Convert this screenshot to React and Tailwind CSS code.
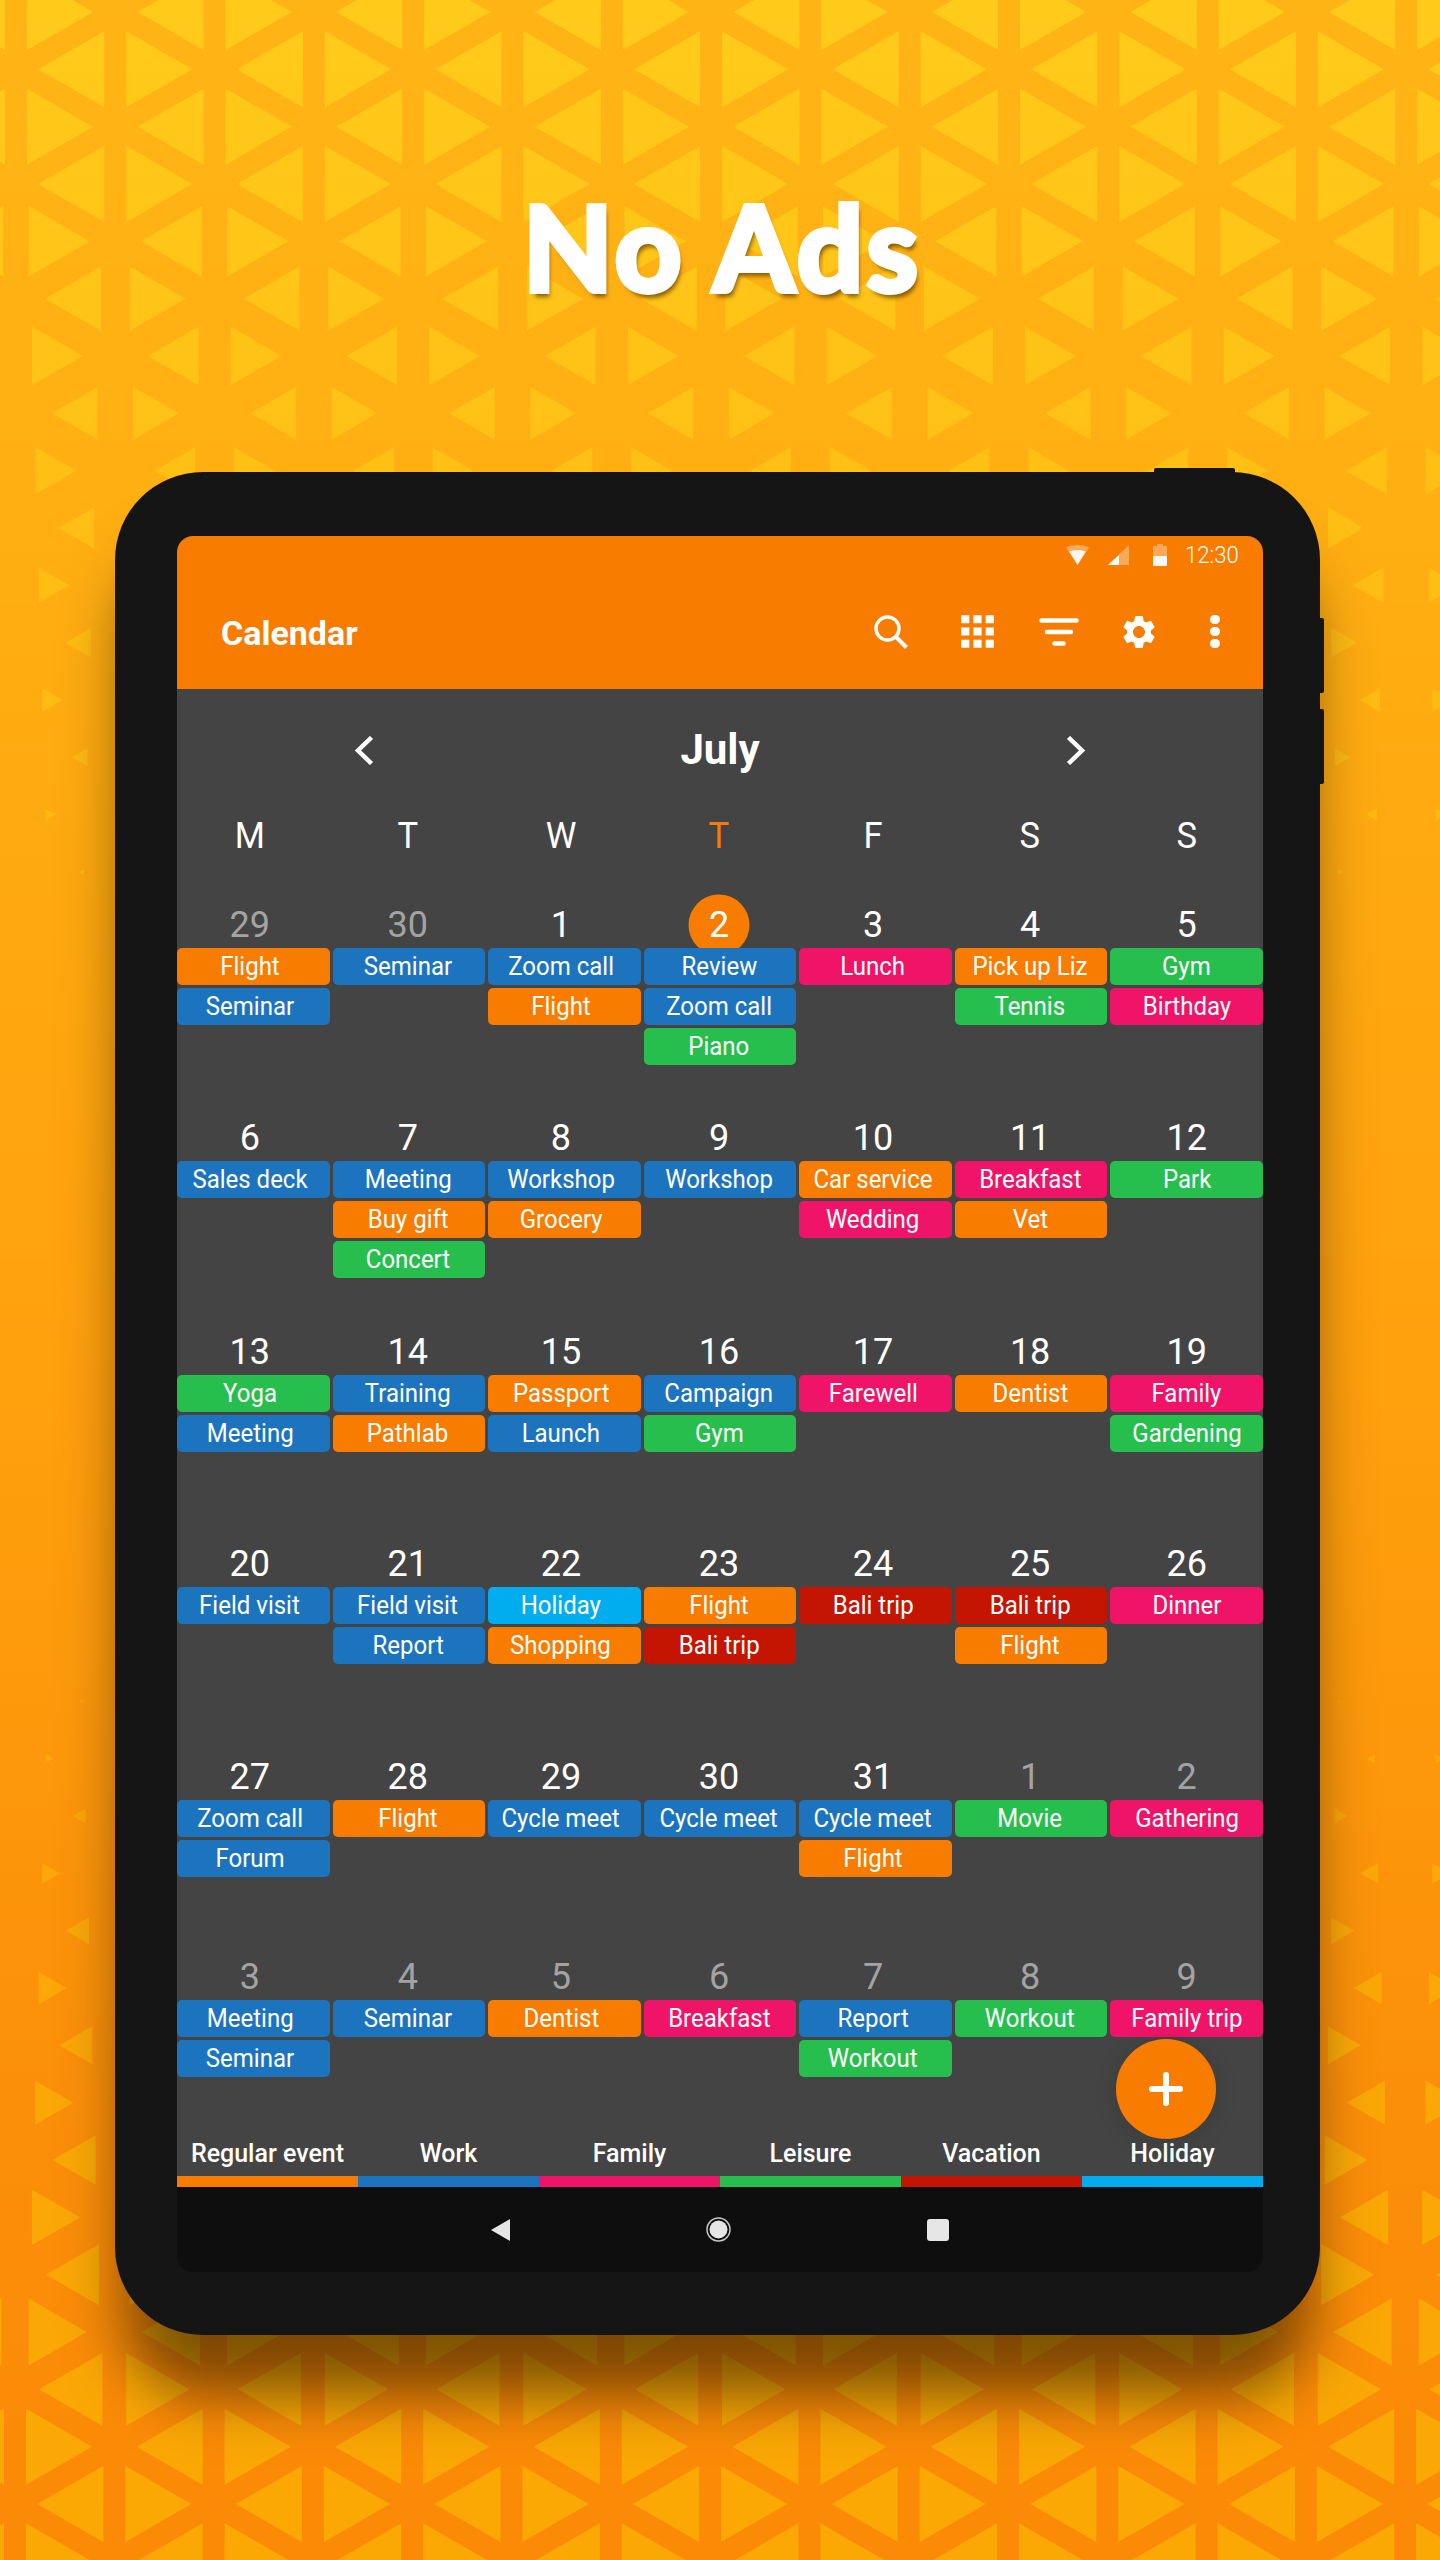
import React from 'react';
import { MdApps, MdSettings } from 'react-icons/md';

const colors = {
  o: 'bg-[#f77c00]',
  b: 'bg-[#1d74be]',
  p: 'bg-[#ef1467]',
  g: 'bg-[#26bf4e]',
  r: 'bg-[#c41502]',
  c: 'bg-[#02adef]',
};

// text in each column sits a little left of the chip centre in the picture
const colPad = ['pr-[7px]', 'pr-[2px]', 'pr-[7px]', 'pr-[2px]', 'pr-[5px]', 'pr-[2px]', 'pr-0'];

const weeks = [
  {
    h: 'h-[213px]',
    days: [
      { n: 29, muted: true, ev: [['Flight', 'o'], ['Seminar', 'b']] },
      { n: 30, muted: true, ev: [['Seminar', 'b']] },
      { n: 1, ev: [['Zoom call', 'b'], ['Flight', 'o']] },
      { n: 2, today: true, ev: [['Review', 'b'], ['Zoom call', 'b'], ['Piano', 'g']] },
      { n: 3, ev: [['Lunch', 'p']] },
      { n: 4, ev: [['Pick up Liz', 'o'], ['Tennis', 'g']] },
      { n: 5, ev: [['Gym', 'g'], ['Birthday', 'p']] },
    ],
  },
  {
    h: 'h-[214px]',
    days: [
      { n: 6, ev: [['Sales deck', 'b']] },
      { n: 7, ev: [['Meeting', 'b'], ['Buy gift', 'o'], ['Concert', 'g']] },
      { n: 8, ev: [['Workshop', 'b'], ['Grocery', 'o']] },
      { n: 9, ev: [['Workshop', 'b']] },
      { n: 10, ev: [['Car service', 'o'], ['Wedding', 'p']] },
      { n: 11, ev: [['Breakfast', 'p'], ['Vet', 'o']] },
      { n: 12, ev: [['Park', 'g']] },
    ],
  },
  {
    h: 'h-[212px]',
    days: [
      { n: 13, ev: [['Yoga', 'g'], ['Meeting', 'b']] },
      { n: 14, ev: [['Training', 'b'], ['Pathlab', 'o']] },
      { n: 15, ev: [['Passport', 'o'], ['Launch', 'b']] },
      { n: 16, ev: [['Campaign', 'b'], ['Gym', 'g']] },
      { n: 17, ev: [['Farewell', 'p']] },
      { n: 18, ev: [['Dentist', 'o']] },
      { n: 19, ev: [['Family', 'p'], ['Gardening', 'g']] },
    ],
  },
  {
    h: 'h-[213px]',
    days: [
      { n: 20, ev: [['Field visit', 'b']] },
      { n: 21, ev: [['Field visit', 'b'], ['Report', 'b']] },
      { n: 22, ev: [['Holiday', 'c'], ['Shopping', 'o']] },
      { n: 23, ev: [['Flight', 'o'], ['Bali trip', 'r']] },
      { n: 24, ev: [['Bali trip', 'r']] },
      { n: 25, ev: [['Bali trip', 'r'], ['Flight', 'o']] },
      { n: 26, ev: [['Dinner', 'p']] },
    ],
  },
  {
    h: 'h-[200px]',
    days: [
      { n: 27, ev: [['Zoom call', 'b'], ['Forum', 'b']] },
      { n: 28, ev: [['Flight', 'o']] },
      { n: 29, ev: [['Cycle meet', 'b']] },
      { n: 30, ev: [['Cycle meet', 'b']] },
      { n: 31, ev: [['Cycle meet', 'b'], ['Flight', 'o']] },
      { n: 1, muted: true, ev: [['Movie', 'g']] },
      { n: 2, muted: true, ev: [['Gathering', 'p']] },
    ],
  },
  {
    h: '',
    days: [
      { n: 3, muted: true, ev: [['Meeting', 'b'], ['Seminar', 'b']] },
      { n: 4, muted: true, ev: [['Seminar', 'b']] },
      { n: 5, muted: true, ev: [['Dentist', 'o']] },
      { n: 6, muted: true, ev: [['Breakfast', 'p']] },
      { n: 7, muted: true, ev: [['Report', 'b'], ['Workout', 'g']] },
      { n: 8, muted: true, ev: [['Workout', 'g']] },
      { n: 9, muted: true, ev: [['Family trip', 'p']] },
    ],
  },
];

const weekdays = ['M', 'T', 'W', 'T', 'F', 'S', 'S'];
const legend = [
  ['Regular event', 'o'],
  ['Work', 'b'],
  ['Family', 'p'],
  ['Leisure', 'g'],
  ['Vacation', 'r'],
  ['Holiday', 'c'],
];

// background triangles: a hex lattice, each triangle shrunk around its centroid by row
function triangles() {
  const out = [];
  const pitchX = 99.3;
  const pitchY = 57.33;
  const addRow = (y, odd, x0, s) => {
    if (s <= 0.01) return;
    for (let j = -1; j < 9; j++) {
      const bar = x0 + (odd ? pitchX : 0) + j * pitchX * 2;
      const h = 38 * s;
      const r = bar + 33;
      const l = bar - 33;
      out.push(`${r - 22 * s},${y - h} ${r + 44 * s},${y} ${r - 22 * s},${y + h}`);
      out.push(`${l + 22 * s},${y - h} ${l - 44 * s},${y} ${l + 22 * s},${y + h}`);
    }
  };
  for (let k = -1; k <= 17; k++) {
    const y = 12 + k * pitchY;
    addRow(y, k % 2 !== 0, 16, Math.min(1, Math.max(0, (930 - y) / 746)));
  }
  for (let k = -12; k <= 5; k++) {
    const y = 2332 + k * pitchY;
    addRow(y, k % 2 !== 0, 15, Math.min(1, Math.max(0, (y - 1669) / 752)));
  }
  return out;
}

const trianglePoints = triangles();

const Squeezed = ({ children }) => (
  <span className="inline-block scale-x-[.96] whitespace-nowrap">{children}</span>
);

const Day = ({ day, col }) => (
  <div>
    <div className={`h-[46px] flex items-center justify-center text-[36px] leading-none ${colPad[col]} ${day.muted ? 'text-[#a3a3a3]' : 'text-white'}`}>
      <span className="relative inline-block">
        {day.today && (
          <span className="absolute left-1/2 top-1/2 w-[61px] h-[61px] -translate-x-1/2 -translate-y-1/2 rounded-full bg-[#f77c00]" />
        )}
        <span className="relative">{day.n}</span>
      </span>
    </div>
    <div className="relative flex flex-col gap-[3px]">
      {day.ev.map(([label, c], i) => (
        <div key={i} className={`h-[37px] rounded-[5px] flex items-center justify-center text-[25px] leading-none text-white ${colors[c]} ${colPad[col]}`}>
          <Squeezed>{label}</Squeezed>
        </div>
      ))}
    </div>
  </div>
);

const StatusIcons = () => (
  <div className="flex items-center">
    <svg width="23" height="20" viewBox="0 0 23 20" fill="white">
      <path d="M11.5 20 0 2.5C3 .8 7 0 11.5 0S20 .8 23 2.5Z" opacity=".35" />
      <path d="M11.5 20 3.2 6.5C5.5 5.4 8.3 4.9 11.5 4.9s6 .5 8.300 1.6Z" opacity=".9" />
    </svg>
    <svg className="ml-[19px]" width="21" height="20" viewBox="0 0 21 20" fill="white">
      <path d="M21 0v20H0Z" opacity=".35" />
      <path d="M11 10v10H0Z" opacity=".95" />
    </svg>
    <svg className="ml-[24px]" width="14" height="22" viewBox="0 0 14 22" fill="white">
      <path d="M4 0h6v2h4v10H0V2h4Z" opacity=".35" />
      <path d="M0 12h14v9a1 1 0 0 1-1 1H1a1 1 0 0 1-1-1Z" opacity=".95" />
    </svg>
    <span className="ml-[17px] mr-[23px] text-[23px] leading-none font-light text-white">
      <Squeezed>12:30</Squeezed>
    </span>
  </div>
);

const ToolbarIcons = () => (
  <div className="flex items-center text-white">
    <svg width="34" height="34" viewBox="0 0 34 34" fill="none" stroke="white">
      <circle cx="13.500" cy="13.500" r="11.500" strokeWidth="3.500" />
      <path d="M21.500 21.500 32.500 32.500" strokeWidth="4" />
    </svg>
    <MdApps className="ml-[45px] w-[49px] h-[49px]" />
    <svg className="ml-[37px]" width="40" height="28" viewBox="0 0 40 28" fill="none" stroke="white" strokeWidth="4.500" strokeLinecap="round">
      <path d="M2.500 2.500h35M8 14h24M15.500 25.500h9" />
    </svg>
    <MdSettings className="ml-[40px] w-[40px] h-[40px]" />
    <div className="ml-[51px] mr-[43px] flex flex-col gap-[3px]">
      <span className="w-[10px] h-[9px] rounded-full bg-white" />
      <span className="w-[10px] h-[9px] rounded-full bg-white" />
      <span className="w-[10px] h-[9px] rounded-full bg-white" />
    </div>
  </div>
);

const Chevron = ({ flip }) => (
  <svg width="19" height="29" viewBox="0 0 19 29" fill="none" stroke="white" strokeWidth="4.500">
    <path d={flip ? 'M2.500 1.500 16 14.500 2.500 27.500' : 'M16.500 1.500 3 14.500 16.500 27.500'} />
  </svg>
);

export default function App() {
  return (
    <div className="relative w-[1440px] h-[2560px] overflow-hidden font-[Roboto,sans-serif] bg-[linear-gradient(180deg,#ffb415_0,#ffaf12_500px,#ffa00d_1400px,#fb8f09_2100px,#fb8a06_100%)]">
      {/* Background pattern */}
      <svg className="absolute inset-0" width="1440" height="2560" viewBox="0 0 1440 2560">
        <defs>
          <linearGradient id="tri" gradientUnits="userSpaceOnUse" x1="0" y1="0" x2="0" y2="2560">
            <stop offset="0" stopColor="#ffcb1b" />
            <stop offset=".2" stopColor="#ffbf14" />
            <stop offset=".7" stopColor="#fba808" />
            <stop offset="1" stopColor="#fba805" />
          </linearGradient>
        </defs>
        <g fill="url(#tri)">
          {trianglePoints.map((p, i) => (
            <polygon key={i} points={p} />
          ))}
        </g>
      </svg>

      <div className="relative">
        {/* Title */}
        <div className="h-[472px] pt-[22px] pl-[5px] flex items-center justify-center">
          <h1 className="font-['Lato',sans-serif] font-bold text-[116px] tracking-[4px] leading-none text-white [-webkit-text-stroke:6px_white] [stroke-linejoin:round] [text-shadow:3px_6px_4px_rgba(70,45,0,.65)]">
            No Ads
          </h1>
        </div>

        {/* Tablet */}
        <div className="relative ml-[115px] w-[1205px] h-[1863px] rounded-[88px] bg-[#151515] pt-[64px] pl-[62px] shadow-[0_70px_60px_-10px_rgba(0,0,0,.5)]">
          <div className="absolute -top-[4px] left-[1039px] w-[81px] h-[6px] rounded-t-[2px] bg-[#151515]" />
          <div className="absolute top-[146px] -right-[4px] w-[6px] h-[75px] rounded-r-[2px] bg-[#151515]" />
          <div className="absolute top-[237px] -right-[4px] w-[6px] h-[75px] rounded-r-[2px] bg-[#151515]" />

          {/* Screen */}
          <div className="relative w-[1086px] h-[1736px] rounded-[16px] overflow-hidden flex flex-col bg-[#0e0e0e]">
            <div className="bg-[#f77c00] h-[153px] shrink-0">
              <div className="h-[38px] flex items-center justify-end">
                <StatusIcons />
              </div>
              <div className="h-[115px] flex items-center justify-between pl-[44px]">
                <span className="pt-[2px] text-[34px] leading-none font-bold text-white">Calendar</span>
                <ToolbarIcons />
              </div>
            </div>

            {/* Calendar */}
            <div className="flex-1 flex flex-col bg-[#444444]">
              <div className="h-[122px] mx-auto w-[730px] flex items-center justify-between">
                <Chevron />
                <span className="text-[42px] leading-none font-bold text-white">July</span>
                <Chevron flip />
              </div>
              <div className="h-[50px] grid grid-cols-7 gap-x-[3px]">
                {weekdays.map((d, i) => (
                  <div key={i} className={`flex items-center justify-center text-[36px] leading-none ${colPad[i]} ${i === 3 ? 'text-[#f77c00]' : 'text-white'}`}>
                    <Squeezed>{d}</Squeezed>
                  </div>
                ))}
              </div>
              <div className="mt-[41px]">
                {weeks.map((w, wi) => (
                  <div key={wi} className={`grid grid-cols-7 gap-x-[3px] ${w.h}`}>
                    {w.days.map((day, i) => (
                      <Day key={i} day={day} col={i} />
                    ))}
                  </div>
                ))}
              </div>

              {/* Legend */}
              <div className="mt-auto grid grid-cols-6">
                {legend.map(([label, c]) => (
                  <div key={label} className="flex flex-col items-center">
                    <span className="h-[46px] flex items-center text-[25px] leading-none font-medium text-white">
                      {label}
                    </span>
                    <div className={`w-full h-[11px] ${colors[c]}`} />
                  </div>
                ))}
              </div>
            </div>

            {/* Nav bar */}
            <div className="h-[85px] shrink-0 flex items-center justify-center gap-[196px]">
              <svg width="19" height="22" viewBox="0 0 19 22" fill="#e6e6e6">
                <path d="M19 0v22L0 11Z" />
              </svg>
              <svg width="25" height="25" viewBox="0 0 25 25">
                <circle cx="12.500" cy="12.500" r="11.500" fill="none" stroke="#c8c8c8" strokeWidth="1.500" />
                <circle cx="12.500" cy="12.500" r="9" fill="#e6e6e6" />
              </svg>
              <div className="w-[22px] h-[22px] rounded-[3px] bg-[#e6e6e6]" />
            </div>

            {/* Add button */}
            <div className="absolute left-[939px] top-[1503px] w-[100px] h-[100px] rounded-full bg-[#f77c00] flex items-center justify-center shadow-[0_4px_24px_rgba(0,0,0,.12)]">
              <svg width="34" height="34" viewBox="0 0 34 34" fill="none" stroke="white" strokeWidth="6" strokeLinecap="round">
                <path d="M17 3v28M3 17h28" />
              </svg>
            </div>
          </div>
        </div>
      </div>
    </div>
  );
}
